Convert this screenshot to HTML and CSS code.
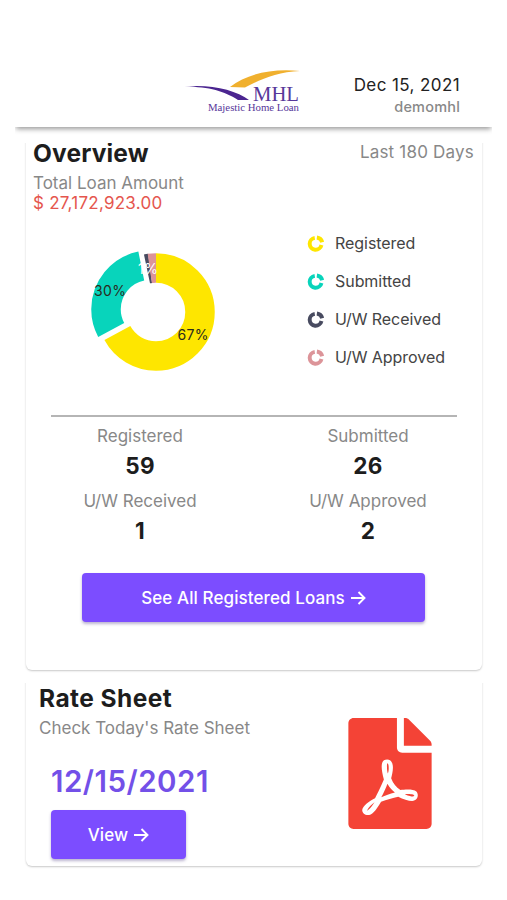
FILE: index.html
```html
<!DOCTYPE html>
<html lang="en">
<head>
<meta charset="utf-8">
<title>Majestic Home Loan</title>
<link rel="stylesheet" href="styles.css">
</head>
<body>
<header class="header">
  <svg class="logo" width="130" height="56" viewBox="0 0 130 56">
    <path d="M47 19C64 6 89 0 117 3C94 4 76 12 62 19.500Z" fill="#f0b02e"/>
    <path d="M2 18.500C28 16 53 22 66 32L55 32C41 23 27 19 2 18.500Z" fill="#4b2590"/>
    <text class="logo-name" x="70" y="32.500" textLength="46" lengthAdjust="spacingAndGlyphs">MHL</text>
    <text class="logo-sub" x="25" y="43" textLength="91" lengthAdjust="spacingAndGlyphs">Majestic Home Loan</text>
  </svg>
  <div class="account">
    <div class="date">Dec 15, 2021</div>
    <div class="user">demomhl</div>
  </div>
</header>
<main class="content">
  <section class="card overview">
    <div class="title-row">
      <h2 class="title">Overview</h2>
      <span class="period">Last 180 Days</span>
    </div>
    <div class="label">Total Loan Amount</div>
    <div class="amount">$ 27,172,923.00</div>
    <div class="chart-row">
      <svg class="donut" width="136" height="130" viewBox="0 0 136 130">
        <g fill="none" stroke-width="29.5">
          <circle class="yellow" cx="72" cy="66" r="44" pathLength="88" stroke-dasharray="59 29" transform="rotate(-90 72 66)"/>
          <circle class="teal" cx="66" cy="63.2" r="44" pathLength="88" stroke-dasharray="26.1 61.9" stroke-dashoffset="-59.1" transform="rotate(-90 66 63.2)"/>
          <circle class="slate" cx="72" cy="66" r="44" pathLength="88" stroke-dasharray="1 87" stroke-dashoffset="-85.1" transform="rotate(-90 72 66)"/>
          <circle class="pink" cx="72" cy="66" r="44" pathLength="88" stroke-dasharray="2 86" stroke-dashoffset="-86" transform="rotate(-90 72 66)"/>
        </g>
        <text class="pct" x="10" y="50" textLength="32">30%</text>
        <text class="pct" x="93.5" y="93.5" textLength="31">67%</text>
        <text class="pct light" x="54" y="28" textLength="20">1%</text>
      </svg>
      <ul class="legend">
        <li><svg class="ring yellow" viewBox="0 0 16 16"><path d="M7.3 2.7A5.6 5.6 0 1 0 13.6 9.4M9.3 2.3A6 6 0 0 1 14.3 6.8"/></svg>Registered</li>
        <li><svg class="ring teal" viewBox="0 0 16 16"><path d="M7.3 2.7A5.6 5.6 0 1 0 13.6 9.4M9.3 2.3A6 6 0 0 1 14.3 6.8"/></svg>Submitted</li>
        <li><svg class="ring slate" viewBox="0 0 16 16"><path d="M7.3 2.7A5.6 5.6 0 1 0 13.6 9.4M9.3 2.3A6 6 0 0 1 14.3 6.8"/></svg>U/W Received</li>
        <li><svg class="ring pink" viewBox="0 0 16 16"><path d="M7.3 2.7A5.6 5.6 0 1 0 13.6 9.4M9.3 2.3A6 6 0 0 1 14.3 6.8"/></svg>U/W Approved</li>
      </ul>
    </div>
    <div class="stats">
      <div class="stat"><div class="stat-label">Registered</div><div class="stat-value">59</div></div>
      <div class="stat"><div class="stat-label">Submitted</div><div class="stat-value">26</div></div>
      <div class="stat"><div class="stat-label">U/W Received</div><div class="stat-value">1</div></div>
      <div class="stat"><div class="stat-label">U/W Approved</div><div class="stat-value">2</div></div>
    </div>
    <button class="button wide">See All Registered Loans<svg class="arrow" viewBox="0 0 16 16"><path d="M1 8H14M8.5 2L14.5 8L8.5 14"/></svg></button>
  </section>
  <section class="card rates">
    <div class="rates-info">
      <h2 class="title">Rate Sheet</h2>
      <div class="label">Check Today's Rate Sheet</div>
      <div class="rate-date">12/15/2021</div>
      <button class="button">View<svg class="arrow" viewBox="0 0 16 16"><path d="M1 8H14M8.5 2L14.5 8L8.5 14"/></svg></button>
    </div>
    <svg class="pdf" viewBox="0 0 384 512"><path d="M181.9 256.1c-5-16-4.9-46.9-2-46.9 8.4 0 7.6 36.9 2 46.9zm-1.7 47.2c-7.7 20.2-17.3 43.3-28.4 62.7 18.3-7 39-17.2 62.9-21.9-12.7-9.6-24.9-23.4-34.5-40.8zM86.1 428.1c0 .8 13.2-5.4 34.9-40.2-6.7 6.3-29.1 24.5-34.9 40.2zM248 160h136v328c0 13.3-10.7 24-24 24H24c-13.3 0-24-10.7-24-24V24C0 10.7 10.7 0 24 0h200v136c0 13.2 10.8 24 24 24zm-8 171.8c-20-12.2-33.3-29-42.7-53.8 4.5-18.5 11.6-46.6 6.2-64.2-4.7-29.4-42.4-26.5-47.8-6.8-5 18.3-.4 44.1 8.1 77-11.6 27.6-28.7 64.6-40.8 85.8-.1 0-.1.1-.2.1-27.1 13.9-73.6 44.5-54.5 68 5.6 6.9 16 10 21.5 10 17.9 0 35.7-18 61.1-61.8 25.8-8.5 54.1-19.1 79-23.2 21.7 11.8 47.1 19.5 64 19.5 29.2 0 31.2-32 19.7-43.4-13.9-13.6-54.3-9.7-73.6-7.2zM377 105L279 7c-4.5-4.5-10.6-7-17-7h-6v128h128v-6.1c0-6.3-2.5-12.4-7-16.9zm-74.1 255.3c4.1-2.7-2.5-11.9-42.8-9 37.1 15.8 42.8 9 42.8 9z"/></svg>
  </section>
</main>
</body>
</html>
```
FILE: styles.css
```css
* { box-sizing: border-box; }
body { margin: 0; background: #fff; color: #222; font: 17px/20px Inter, "Liberation Sans", sans-serif; }
h2, ul { margin: 0; padding: 0; }
.header { display: flex; justify-content: space-between; height: 127px; margin: 0 15px; padding: 68px 32px 0 168px; box-shadow: 0 3px 5px -1px #999; clip-path: inset(0 0 -12px 0); }
.logo-name { font: 21px "Liberation Serif", serif; fill: #57389a; }
.logo-sub { font: 10px "Liberation Serif", serif; fill: #57389a; }
.account { padding-top: 6px; text-align: right; line-height: 22px; }
.date { letter-spacing: .4px; }
.user { color: #888; font-size: 14.500px; font-weight: 500; line-height: 21px; letter-spacing: .2px; }
.content { padding: 8px 25px 20px 26px; }
.card { border-radius: 6px; box-shadow: 0 1px 2px rgba(0,0,0,.22); clip-path: inset(8px -4px -4px -4px); }
.overview { height: 535px; padding: 6px 8px 0 7px; }
.title-row { display: flex; justify-content: space-between; align-items: center; height: 24px; }
.title { font-size: 24.500px; line-height: 24px; font-weight: 650; letter-spacing: .15px; color: #1d1d1d; }
.rates .title { letter-spacing: .45px; }
.period { position: relative; top: -1px; color: #888; letter-spacing: .2px; }
.label { color: #888; line-height: 20px; }
.overview .label { margin-top: 8px; }
.amount { color: #e5564e; line-height: 21px; letter-spacing: .25px; }
.chart-row { display: flex; margin-top: 18px; padding-left: 51px; height: 183px; }
.donut { margin-top: 14px; overflow: visible; flex: none; }
.yellow { stroke: #fee600; }
.teal { stroke: #08d4bb; }
.slate { stroke: #484b60; }
.pink { stroke: #dc9499; }
.pct { font-size: 14px; fill: #2b2b1d; }
.light { fill: #fff; }
.legend { list-style: none; margin: -8px 0 0 87px; color: #444; font-size: 16px; }
.legend li { display: flex; align-items: center; height: 38px; gap: 11px; white-space: nowrap; letter-spacing: -.05px; }
.ring { width: 17px; height: 17px; fill: none; stroke-width: 3.700; }
.stats { display: grid; grid-template-columns: 1fr 1fr; column-gap: 50px; margin: 0 17px 0 18px; padding-top: 8px; border-top: 2px solid #b5b5b5; }
.stat { height: 65px; text-align: center; }
.stat-label { color: #888; line-height: 22px; }
.stat-value { font-size: 22.500px; line-height: 38px; font-weight: 650; color: #1d1d1d; letter-spacing: .3px; }
.button { display: flex; align-items: center; justify-content: center; gap: 5px; width: 135px; height: 49px; padding: 0; border: 0; border-radius: 4px; background: #7c4dff; color: #fff; font: 500 17px/20px Inter, sans-serif; letter-spacing: .1px; box-shadow: 0 2px 3px rgba(60,40,120,.35); }
.wide { width: 343px; margin: 18px 0 0 49px; }
.arrow { width: 16px; height: 16px; fill: none; stroke: currentColor; stroke-width: 1.900; }
.rates { display: flex; justify-content: space-between; height: 191px; margin-top: 5px; padding: 11px 50px 0 13px; }
.rates .label { margin-top: 8px; }
.rate-date { margin: 25px 0 11px 12px; font-size: 29.500px; line-height: 36px; font-weight: 620; color: #7350e8; letter-spacing: .5px; }
.rates .button { margin-left: 12px; }
.pdf { width: 84px; height: 111px; margin-top: 32px; fill: #f44336; }
```
